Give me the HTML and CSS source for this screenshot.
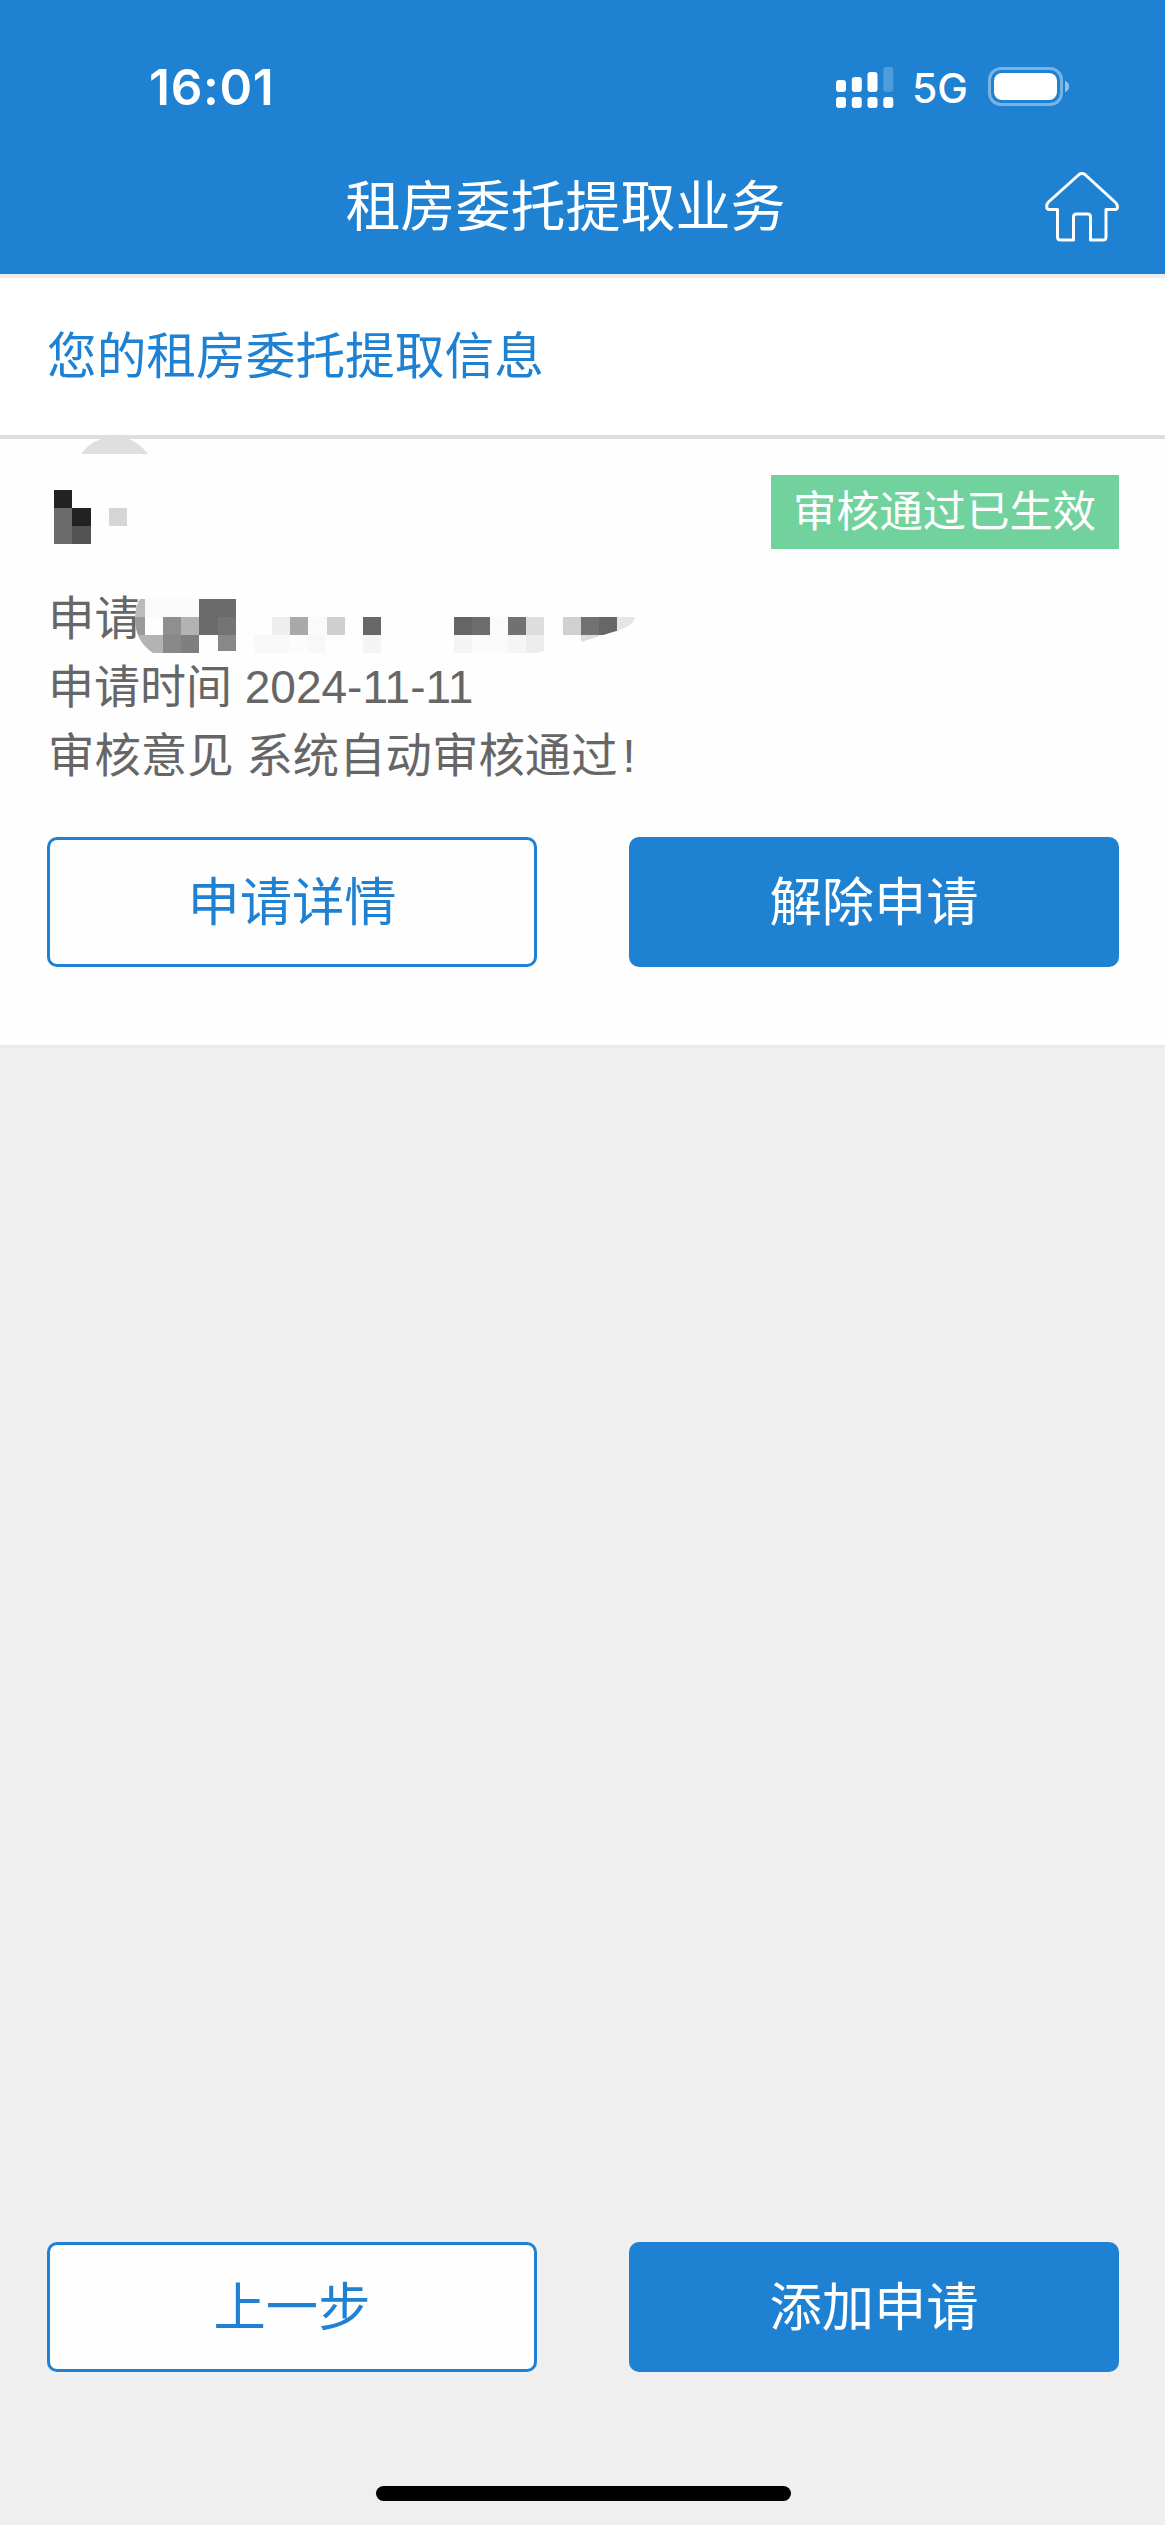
FILE: index.html
```html
<!DOCTYPE html>
<html lang="zh-CN">
<head>
<meta charset="utf-8">
<title>租房委托提取业务</title>
<link rel="stylesheet" href="styles.css">
</head>
<body>
<div class="screen">
  <header class="header">
    <div class="status-bar">
      <span class="time">16:01</span>
      <div class="status-icons">
        <svg class="signal" width="58" height="42" viewBox="0 0 58 42" fill="#fff">
          <rect x="0" y="13" width="10" height="12" rx="3"/>
          <rect x="15.8" y="10" width="10" height="15" rx="3"/>
          <rect x="31.5" y="5" width="10" height="20" rx="3"/>
          <rect x="47.3" y="0" width="10" height="25" rx="3" opacity=".22"/>
          <rect x="0" y="30" width="10" height="11" rx="3"/>
          <rect x="15.8" y="30" width="10" height="11" rx="3"/>
          <rect x="31.5" y="30" width="10" height="11" rx="3"/>
          <rect x="47.3" y="30" width="10" height="11" rx="3"/>
        </svg>
        <span class="network">5G</span>
        <svg class="battery" width="82" height="40" viewBox="0 0 82 40">
          <rect x="1.5" y="1.5" width="72" height="36" rx="11.5" fill="none" stroke="#fff" stroke-opacity=".4" stroke-width="3"/>
          <rect x="6" y="6" width="63" height="27" rx="8" fill="#fff"/>
          <path d="M77 13.7c5.500 2 5.500 9.600 0 11.600z" fill="#fff" fill-opacity=".5"/>
        </svg>
      </div>
    </div>
    <div class="nav-bar">
      <h1 class="title">租房委托提取业务</h1>
      <a class="home" href="#" aria-label="首页">
        <svg width="74" height="70" viewBox="0 0 74 70" fill="none" stroke="#fff" stroke-width="3" stroke-linejoin="round">
          <path d="M33.500 3Q37 0 40.500 3L70.500 30.500Q73 33 72.300 36Q72 37.500 70 37.500H61V65Q61 68 58 68H45.500V45Q45.500 42 42.500 42H31.500Q28.500 42 28.500 45V68H15.500Q12.500 68 12.500 65V37.500H4Q2 37.500 1.700 35Q1.500 32 3.500 30Z"/>
        </svg>
      </a>
    </div>
  </header>

  <h2 class="section-title">您的租房委托提取信息</h2>

  <section class="card">
    <svg class="corner-blot" width="68" height="18" viewBox="0 0 68 18"><path d="M0 18Q13 1 34 0.500Q54 1 67 18Z" fill="#dfdfdf"/></svg>
    <div class="card-head">
      <svg class="name-mask" width="76" height="54" viewBox="0 0 76 54" shape-rendering="crispEdges">
        <rect width="18" height="18" fill="#222"/>
        <rect y="18" width="18" height="36" fill="#6b6b6b"/>
        <rect x="18" y="18" width="19" height="18" fill="#222"/>
        <rect x="18" y="36" width="19" height="18" fill="#535353"/>
        <rect x="55" y="18" width="18" height="18" fill="#d5d5d5"/>
      </svg>
      <span class="badge">审核通过已生效</span>
    </div>
    <div class="info">
      <p class="row">申请<svg class="number-mask" width="500" height="54" viewBox="0 0 500 54">
        <defs><clipPath id="blob"><path d="M5 0H500V18Q500 27 478 33L446 43L400 54H18Q0 42 0 20Q0 8 5 0Z"/></clipPath></defs>
        <g clip-path="url(#blob)" shape-rendering="crispEdges">
          <rect x="0" y="0" width="10" height="18" fill="#bbb"/>
          <rect x="10" y="0" width="54" height="18" fill="#fafafa"/>
          <rect x="64" y="0" width="37" height="18" fill="#6b6b6b"/>
          <rect x="0" y="18" width="10" height="18" fill="#999"/>
          <rect x="28" y="18" width="18" height="18" fill="#8f8f8f"/>
          <rect x="46" y="18" width="18" height="18" fill="#b3b3b3"/>
          <rect x="64" y="18" width="19" height="18" fill="#6b6b6b"/>
          <rect x="83" y="18" width="18" height="18" fill="#747474"/>
          <rect x="101" y="18" width="18" height="18" fill="#fdfdfd"/>
          <rect x="137" y="18" width="18" height="18" fill="#eee"/>
          <rect x="155" y="18" width="18" height="18" fill="#a9a9a9"/>
          <rect x="173" y="18" width="19" height="18" fill="#fafafa"/>
          <rect x="192" y="18" width="18" height="18" fill="#cfcfcf"/>
          <rect x="228" y="18" width="18" height="18" fill="#686868"/>
          <rect x="319" y="18" width="18" height="18" fill="#656565"/>
          <rect x="337" y="18" width="18" height="18" fill="#6d6d6d"/>
          <rect x="355" y="18" width="18" height="18" fill="#fafafa"/>
          <rect x="373" y="18" width="18" height="18" fill="#717171"/>
          <rect x="391" y="18" width="18" height="18" fill="#ddd"/>
          <rect x="428" y="18" width="18" height="18" fill="#d0d0d0"/>
          <rect x="446" y="18" width="18" height="18" fill="#727272"/>
          <rect x="464" y="18" width="18" height="18" fill="#676767"/>
          <rect x="482" y="18" width="18" height="18" fill="#e6e6e6"/>
          <rect x="0" y="36" width="28" height="18" fill="#b3b3b3"/>
          <rect x="28" y="36" width="18" height="18" fill="#888"/>
          <rect x="46" y="36" width="18" height="18" fill="#7f7f7f"/>
          <rect x="83" y="36" width="18" height="16" fill="#888"/>
          <rect x="119" y="36" width="36" height="18" fill="#f9f9f9"/>
          <rect x="155" y="36" width="18" height="18" fill="#fcfcfc"/>
          <rect x="173" y="36" width="18" height="18" fill="#f8f8f8"/>
          <rect x="228" y="36" width="18" height="18" fill="#f4f4f4"/>
          <rect x="319" y="36" width="18" height="18" fill="#f4f4f4"/>
          <rect x="337" y="36" width="36" height="18" fill="#fafafa"/>
          <rect x="373" y="36" width="18" height="18" fill="#f5f5f5"/>
          <rect x="391" y="36" width="18" height="18" fill="#ececec"/>
          <rect x="446" y="36" width="18" height="18" fill="#ddd"/>
        </g>
      </svg></p>
      <p class="row date-row">申请时间 2024-11-11</p>
      <p class="row">审核意见 系统自动审核通过<span class="mark">!</span></p>
    </div>
    <div class="actions">
      <button class="btn btn-outline">申请详情</button>
      <button class="btn btn-solid">解除申请</button>
    </div>
  </section>

  <footer class="footer">
    <div class="actions">
      <button class="btn btn-outline">上一步</button>
      <button class="btn btn-solid">添加申请</button>
    </div>
    <div class="home-indicator"></div>
  </footer>
</div>
</body>
</html>
```
FILE: styles.css
```css
* {
  box-sizing: border-box;
  margin: 0;
  padding: 0;
}

body {
  background: #efefef;
  font-family: "Liberation Sans", "Noto Sans CJK SC", sans-serif;
}

.screen {
  display: flex;
  flex-direction: column;
  width: 1165px;
  height: 2525px;
  overflow: hidden;
}

.header {
  flex: none;
  height: 274px;
  background: #1f81d1;
  color: #fff;
}

.status-bar {
  display: flex;
  justify-content: space-between;
  align-items: center;
  height: 146px;
  padding: 28px 95px 0 149px;
  font-family: Inter, sans-serif;
}

.time {
  font-size: 49.5px;
  font-weight: 600;
  letter-spacing: 0.7px;
  line-height: 60px;
}

.status-icons {
  display: flex;
  align-items: center;
}

.signal {
  margin-top: 2px;
}

.network {
  margin: 2px 20px 0 18px;
  font-size: 41px;
  font-weight: 500;
  line-height: 48px;
}

.nav-bar {
  display: grid;
  grid-template-columns: 120px 1fr 120px;
  align-items: center;
  height: 122px;
}

.title {
  grid-column: 2;
  margin-right: 34px;
  font-size: 55px;
  font-weight: 400;
  line-height: 80px;
  text-align: center;
}

.home {
  height: 70px;
}

.section-title {
  flex: none;
  height: 165px;
  padding: 2px 0 0 47px;
  border-bottom: 4px solid #dedede;
  background: linear-gradient(#e6ecef, #f0f0f2 4px, #fff 5px);
  color: #1f81d1;
  font-size: 49.700px;
  font-weight: 400;
  line-height: 163px;
}

.card {
  flex: none;
  position: relative;
  height: 606px;
  padding: 36px 46px 0 47px;
  background: #fefefe;
}

.corner-blot {
  position: absolute;
  top: -3px;
  left: 81px;
}

.card-head {
  display: flex;
  justify-content: space-between;
  align-items: flex-start;
  height: 110px;
}

.name-mask {
  margin: 15px 0 0 7px;
}

.badge {
  width: 348px;
  height: 74px;
  background: #72d29e;
  color: #fff;
  font-size: 43.300px;
  line-height: 75px;
  text-align: center;
  text-indent: -1px;
}

.info {
  height: 252px;
  color: #666;
  font-size: 46.400px;
}

.row {
  display: flex;
  height: 68.500px;
  padding-left: 1px;
  line-height: 68.500px;
  white-space: pre;
}

.date-row {
  font-size: 46px;
  line-height: 67px;
}

.mark {
  margin-left: 5px;
}

.number-mask {
  margin: 14px 0 0 -6px;
}

.actions {
  display: flex;
  justify-content: space-between;
}

.btn {
  width: 490px;
  height: 130px;
  padding-top: 2px;
  border: 3px solid #1f81d1;
  border-radius: 10px;
  font-family: inherit;
  font-size: 52.300px;
  line-height: 122px;
  text-align: center;
}

.btn-outline {
  background: #fefefe;
  color: #1f81d1;
}

.btn-solid {
  background: #1f81d1;
  color: #fff;
}

.footer {
  display: flex;
  flex: 1;
  flex-direction: column;
  justify-content: flex-end;
  padding: 0 46px 24px 47px;
  border-top: 3px solid #eaeaea;
}

.home-indicator {
  align-self: center;
  width: 415px;
  height: 15px;
  margin-top: 114px;
  border-radius: 8px;
  background: #000;
}
```
